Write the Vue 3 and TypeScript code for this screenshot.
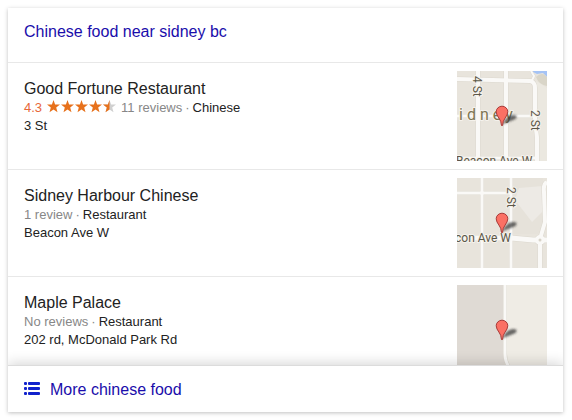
<script setup lang="ts">
interface Label {
  text: string
  x: number
  y: number
  kind: 'street' | 'town'
  turn?: number
}

interface Shape {
  d: string
  fill: string
}

interface Road {
  d: string
  width: number
}

interface Place {
  name: string
  rating?: number
  reviews: string
  category: string
  address: string
  ground: string
  shapes: Shape[]
  roads: Road[]
  island?: { x: number; y: number }
  labels: Label[]
}

const places: Place[] = [
  {
    name: 'Good Fortune Restaurant',
    rating: 4.3,
    reviews: '11 reviews',
    category: 'Chinese',
    address: '3 St',
    ground: '#e8e4dc',
    shapes: [
      { d: 'M79 10L90 17V90H82L78 62Z', fill: '#ebe8e0' },
      { d: 'M74 0H90V6L86 2L80 3Z', fill: '#a5c3f5' },
      { d: 'M79 6Q84 1 88 4L90 6V15Q82 14 79 6Z', fill: '#d9d5c8' },
    ],
    roads: [
      { d: 'M0 8L73 10Q78 11 78 17V50L80 66V90', width: 4 },
      { d: 'M73 10Q76 9 77 5L74 0', width: 2 },
      { d: 'M21 0V90M49 0V90', width: 4 },
      { d: 'M0 45H78', width: 3 },
      { d: 'M0 87H82', width: 3 },
    ],
    labels: [
      { text: 'idney', x: 2, y: 49, kind: 'town' },
      { text: '4 St', x: 16, y: 5, kind: 'street', turn: 90 },
      { text: '2 St', x: 74, y: 39, kind: 'street', turn: 90 },
      { text: 'Beacon Ave W', x: -1, y: 94, kind: 'street' },
    ],
  },
  {
    name: 'Sidney Harbour Chinese',
    reviews: '1 review',
    category: 'Restaurant',
    address: 'Beacon Ave W',
    ground: '#e8e4dc',
    shapes: [
      { d: 'M56 0H86V56H56Z', fill: '#e6e2da' },
      { d: 'M58 22L62 10L86 8L88 31L75 44Z', fill: '#edeae5' },
    ],
    roads: [
      { d: 'M0 15H54', width: 3 },
      { d: 'M25 0V90', width: 3 },
      { d: 'M54 0V90', width: 3 },
      { d: 'M0 60H54L76 62H90', width: 5 },
      { d: 'M90 4Q86 6 87 14L88 44L83 61V90', width: 4 },
      { d: 'M81 62a2 2 0 1 0 4 0a2 2 0 1 0 -4 0', width: 6 },
    ],
    island: { x: 83, y: 62 },
    labels: [
      { text: '2 St', x: 50, y: 9, kind: 'street', turn: 90 },
      { text: 'con Ave W', x: -2, y: 64, kind: 'street' },
    ],
  },
  {
    name: 'Maple Palace',
    reviews: 'No reviews',
    category: 'Restaurant',
    address: '202 rd, McDonald Park Rd',
    ground: '#dfdad4',
    shapes: [{ d: 'M48 0H90V90H56L48 74Z', fill: '#efece5' }],
    roads: [{ d: 'M48 0V69Q48 76 52 82L56 90', width: 3 }],
    labels: [],
  },
]

const starPath =
  'M6.5 0L8.1 4.5L13 4.6L9.2 7.6L10.5 12.2L6.5 9.5L2.5 12.2L3.8 7.6L0 4.6L4.9 4.5Z'

const starFill = (rating: number, index: number): 'full' | 'half' | 'none' => {
  const rest = rating - index
  if (rest >= 0.75) return 'full'
  return rest >= 0.25 ? 'half' : 'none'
}
</script>

<template>
  <main class="card">
    <header class="head">
      <a class="link" href="#">Chinese food near sidney bc</a>
    </header>

    <ul class="places">
      <li v-for="(place, n) in places" :key="place.name" class="place">
        <div class="info">
          <h2 class="name">{{ place.name }}</h2>
          <p class="line muted">
            <template v-if="place.rating">
              <span class="rating">{{ place.rating }}</span>
              <svg class="stars" viewBox="0 0 69 13" aria-hidden="true">
                <g v-for="i in 5" :key="i" :transform="`translate(${(i - 1) * 14} 0)`">
                  <path :d="starPath" :fill="starFill(place.rating, i - 1) === 'full' ? '#e7711b' : '#d0d0d0'" />
                  <path
                    v-if="starFill(place.rating, i - 1) === 'half'"
                    d="M6.5 0V9.5L2.5 12.2L3.8 7.6L0 4.6L4.9 4.5Z"
                    fill="#e7711b"
                  />
                </g>
              </svg>
            </template>
            <span class="facts">
              <span>{{ place.reviews }}</span>
              <span>·</span>
              <span class="dark">{{ place.category }}</span>
            </span>
          </p>
          <p class="line dark">{{ place.address }}</p>
        </div>

        <svg class="map" viewBox="0 0 90 90" role="img">
          <defs>
            <filter :id="`soft-${n}`" x="-30%" y="-50%" width="160%" height="200%">
              <feGaussianBlur stdDeviation="0.8" />
            </filter>
          </defs>
          <rect width="90" height="90" :fill="place.ground" />
          <path v-for="s in place.shapes" :key="s.d" :d="s.d" :fill="s.fill" />
          <path v-for="r in place.roads" :key="r.d" :d="r.d" fill="none" stroke="#dcd8cf" :stroke-width="r.width + 1" />
          <path v-for="r in place.roads" :key="`${r.d}-top`" :d="r.d" fill="none" stroke="#faf9f7" :stroke-width="r.width" />
          <circle v-if="place.island" :cx="place.island.x" :cy="place.island.y" r="1.5" fill="#d8d3c8" />
          <text
            v-for="l in place.labels"
            :key="l.text"
            :class="['label', l.kind]"
            :transform="`translate(${l.x} ${l.y}) rotate(${l.turn ?? 0})`"
          >{{ l.text }}</text>
          <path
            d="M45 54C47 49 51 44 57 44C61 44 60 48 56 49C52 51 49 51 45 54Z"
            fill="#303030"
            fill-opacity="0.7"
            :filter="`url(#soft-${n})`"
          />
          <path
            d="M44.5 54.5C44.5 48 39.2 45.5 39.2 40.8A5.8 5.6 0 0 1 50.8 40.8C50.8 45.5 45.5 48 45.5 54.5Z"
            fill="#fb7064"
            stroke="#a83a38"
            stroke-width="1"
          />
        </svg>
      </li>
    </ul>

    <footer class="foot">
      <a class="link more" href="#">
        <svg class="list-icon" viewBox="0 0 16 13" aria-hidden="true">
          <g fill="#1122cc">
            <rect x="0" y="0" width="3" height="3" rx="1" />
            <rect x="4" y="0" width="12" height="3" rx="1" />
            <rect x="0" y="5" width="3" height="3" rx="1" />
            <rect x="4" y="5" width="12" height="3" rx="1" />
            <rect x="0" y="10" width="3" height="3" rx="1" />
            <rect x="4" y="10" width="12" height="3" rx="1" />
          </g>
        </svg>
        <span>More chinese food</span>
      </a>
    </footer>
  </main>
</template>

<style>
body {
  background: #fff;
}
</style>

<style scoped>
.card {
  margin: 8px 9px 8px 8px;
  background: #fff;
  box-shadow: 0 1px 4px rgba(0, 0, 0, 0.25);
  font-family: "Liberation Sans", Arial, sans-serif;
  color: #222;
}

.head {
  padding: 14px 16px 20px;
  border-bottom: 1px solid #e8e8e8;
  line-height: 20px;
}

.link {
  color: #1a0dab;
  font-size: 16px;
  text-decoration: none;
}

.places {
  margin: 0;
  padding: 0;
  list-style: none;
}

.place {
  display: flex;
  justify-content: space-between;
  gap: 16px;
  padding: 8px 16px;
  border-bottom: 1px solid #e8e8e8;
}

.place:last-child {
  padding-bottom: 0;
  border-bottom: 0;
  margin-bottom: -10px;
}

.info {
  padding-top: 8px;
}

.name {
  margin: 0;
  font-size: 16px;
  font-weight: 400;
  line-height: 20px;
}

.line {
  display: flex;
  align-items: center;
  margin: 0;
  font-size: 13px;
  line-height: 18px;
}

.facts {
  display: flex;
  gap: 3px;
}

.muted {
  color: #878787;
}

.dark {
  color: #222;
}

.rating {
  color: #e7673a;
}

.stars {
  width: 69px;
  height: 13px;
  margin: 0 5px 3px;
}

.map {
  flex: none;
  width: 90px;
  height: 90px;
  overflow: hidden;
}

.label {
  font-family: Roboto, sans-serif;
  fill: #5c5748;
  stroke: #f5f2ec;
  stroke-width: 2px;
  stroke-linejoin: round;
  paint-order: stroke;
}

.street {
  font-size: 12px;
}

.town {
  font-size: 16px;
  letter-spacing: 4px;
  fill: #7d7552;
}

.foot {
  position: relative;
  padding: 14px 16px 12px;
  background: #fff;
  border-top: 1px solid #dcdcdc;
  box-shadow: 0 -2px 12px rgba(0, 0, 0, 0.16);
  clip-path: inset(-14px 0 0 0);
  line-height: 20px;
}

.more {
  display: flex;
  align-items: center;
  gap: 10px;
}

.list-icon {
  width: 16px;
  height: 13px;
  margin-bottom: 3px;
}
</style>
